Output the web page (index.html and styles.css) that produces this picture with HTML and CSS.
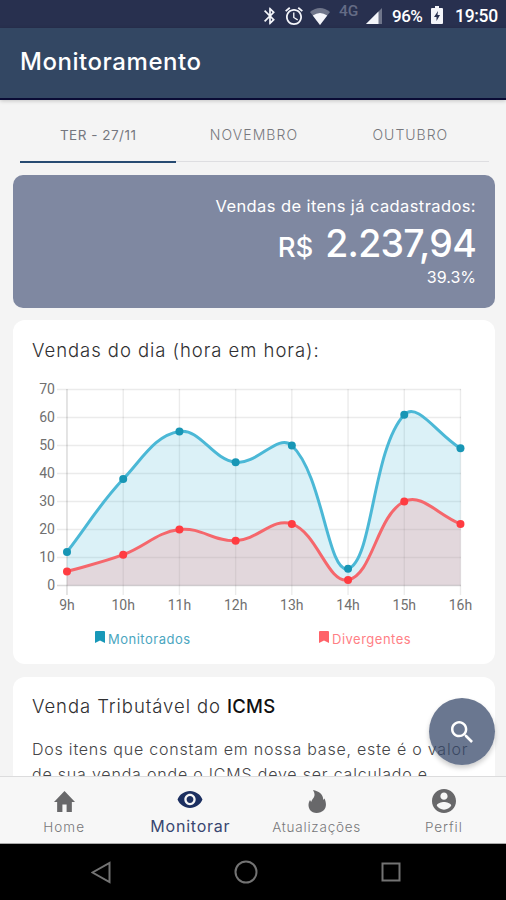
FILE: index.html
```html
<!DOCTYPE html>
<html lang="pt-BR">
<head>
<meta charset="utf-8">
<title>Monitoramento</title>
<link rel="stylesheet" href="styles.css">
</head>
<body>
<div class="phone">
  <div class="status">
    <svg class="s-bt" viewBox="5 2 14 20"><path d="M17.71 7.71L12 2h-1v7.59L6.41 5 5 6.41 10.59 12 5 17.59 6.41 19 11 14.41V22h1l5.71-5.71-4.3-4.29 4.3-4.29zM13 5.83l1.88 1.88L13 9.59V5.83zm1.88 10.46L13 18.17v-3.76l1.88 1.88z"/></svg>
    <svg class="s-alarm" viewBox="2 1.8 20 20.2"><path d="M22 5.72l-4.6-3.86-1.29 1.53 4.6 3.86L22 5.72zM7.88 3.39L6.6 1.86 2 5.71l1.29 1.53 4.59-3.85zM12.5 8H11v6l4.75 2.85.75-1.23-4-2.37V8zM12 4c-4.97 0-9 4.03-9 9s4.02 9 9 9c4.97 0 9-4.03 9-9s-4.03-9-9-9zm0 16c-3.87 0-7-3.13-7-7s3.13-7 7-7 7 3.13 7 7-3.13 7-7 7z"/></svg>
    <svg class="s-wifi" viewBox="0 0 20 17"><path opacity=".35" d="M10 17L0 4Q10-4 20 4Z"/><path d="M10 17L2.8 7.6Q10 2.5 17.2 7.6Z"/></svg>
    <span class="net">4G</span>
    <svg class="s-cell" viewBox="0 0 16 16"><path opacity=".35" d="M16 0v16H0Z"/><path d="M12.500 3.500V16H0Z"/></svg>
    <span class="pct">96%</span>
    <svg class="s-bat" viewBox="0 0 12 18"><path fill-rule="evenodd" d="M4 0h4v2h3q1 0 1 1v14q0 1-1 1H1q-1 0-1-1V3q0-1 1-1h3ZM7 5L3 11h2.500v4L9 9H6.500Z"/></svg>
    <span class="clock">19:50</span>
  </div>
  <header class="appbar"><h1>Monitoramento</h1></header>
  <main class="content">
    <nav class="tabs">
      <span class="tab tab-on"><b class="t1">TER - 27/11</b></span>
      <span class="tab"><b class="t2">NOVEMBRO</b></span>
      <span class="tab"><b class="t3">OUTUBRO</b></span>
    </nav>
    <section class="summary">
      <p class="sum-label">Vendas de itens já cadastrados:</p>
      <p class="sum-value"><span class="cur">R$</span><span class="amount">2.237,94</span></p>
      <p class="sum-pct">39.3%</p>
    </section>
    <section class="card chart-card">
      <h2 class="h-chart">Vendas do dia (hora em hora):</h2>
      <svg class="chart" id="chart" viewBox="13 380 482 235"></svg>
      <div class="legend">
        <span class="leg blue"><svg viewBox="0 0 10 12"><path d="M1 0h8q1 0 1 1v11L5 9.500 0 12V1Q0 0 1 0Z"/></svg><span class="lb">Monitorados</span></span>
        <span class="leg red"><svg viewBox="0 0 10 12"><path d="M1 0h8q1 0 1 1v11L5 9.500 0 12V1Q0 0 1 0Z"/></svg><span class="lr">Divergentes</span></span>
      </div>
    </section>
    <section class="card icms">
      <h2 class="h-icms">Venda Tributável do <strong>ICMS</strong></h2>
      <p><span class="p1">Dos itens que constam em nossa base, este é o valor</span><br><span class="p2">de sua venda onde o ICMS deve ser calculado e</span></p>
    </section>
    <button class="fab" aria-label="Buscar"><svg viewBox="3 3 17.500 17.500"><path d="M15.500 14h-.79l-.28-.27C15.410 12.590 16 11.110 16 9.500 16 5.910 13.090 3 9.500 3S3 5.910 3 9.500 5.910 16 9.500 16c1.610 0 3.090-.59 4.230-1.570l.27.28v.79l5 4.990L20.490 19l-4.990-5zm-6 0C7.010 14 5 11.990 5 9.500S7.010 5 9.500 5 14 7.010 14 9.500 11.990 14 9.500 14z"/></svg></button>
  </main>
  <nav class="bottom">
    <div class="item"><svg class="i-home" viewBox="2 3 20 17" preserveAspectRatio="none"><path d="M10 20v-6h4v6h5v-8h3L12 3 2 12h3v8z"/></svg><span class="n1">Home</span></div>
    <div class="item on"><svg class="i-eye" viewBox="1 4.500 22 15"><path d="M12 4.500C7 4.500 2.730 7.610 1 12c1.730 4.390 6 7.500 11 7.500s9.270-3.110 11-7.500c-1.730-4.390-6-7.500-11-7.500zM12 17c-2.760 0-5-2.240-5-5s2.240-5 5-5 5 2.240 5 5-2.240 5-5 5zm0-8c-1.660 0-3 1.340-3 3s1.340 3 3 3 3-1.340 3-3-1.340-3-3-3z"/></svg><span class="n2">Monitorar</span></div>
    <div class="item"><svg class="i-fire" viewBox="0 0 18 23"><path d="M5 0C11 1 16 5 15 10L16.500 8.500C18.500 13 18.500 17 16 20C12 24 5 24 2 20C0 17 0 13 2 10L3.200 12C4 8 9 7 5 0Z"/></svg><span class="n3">Atualizações</span></div>
    <div class="item"><svg class="i-user" viewBox="2 2 20 20"><path d="M12 2C6.480 2 2 6.480 2 12s4.480 10 10 10 10-4.480 10-10S17.520 2 12 2zm0 3c1.660 0 3 1.340 3 3s-1.340 3-3 3-3-1.340-3-3 1.340-3 3-3zm0 14.200c-2.500 0-4.710-1.280-6-3.220.03-1.990 4-3.080 6-3.080 1.990 0 5.970 1.090 6 3.080-1.290 1.940-3.500 3.220-6 3.220z"/></svg><span class="n4">Perfil</span></div>
  </nav>
  <div class="sys">
    <svg class="k-back" viewBox="0 0 20 23"><path d="M18.500 2v19L1.500 11.500Z"/></svg>
    <svg class="k-home" viewBox="0 0 24 24"><circle cx="12" cy="12" r="10.500"/></svg>
    <svg class="k-apps" viewBox="0 0 20 20"><rect x="1.500" y="1.500" width="17" height="17"/></svg>
  </div>
</div>
<script src="chart.js"></script>
</body>
</html>
```
FILE: styles.css
```css
* { box-sizing: border-box; margin: 0; padding: 0; }
body { width: 506px; height: 900px; overflow: hidden; font-family: Inter, "Liberation Sans", sans-serif; background: #f4f4f4; }
.phone { height: 900px; display: flex; flex-direction: column; }
span, b { white-space: nowrap; }
.status { flex: none; height: 28px; background: #28304f; display: flex; align-items: center; padding: 4px 0 0 264px; color: #fff; font-family: Roboto, sans-serif; font-weight: 500; }
.status svg { fill: #f4f5fa; flex: none; }
.s-bt { width: 12px; height: 18px; margin-top: -1px; }
.s-alarm { width: 18px; height: 18px; margin: -1px 0 0 9px; }
.s-wifi { width: 20px; height: 17px; margin-left: 7px; }
.net { font-size: 15.5px; color: #646b85; margin: -11px 0 0 9px; width: 20px; }
.s-cell { width: 16px; height: 16px; margin-left: 7px; }
.pct { font-size: 17px; margin-left: 10px; width: 31px; letter-spacing: -.5px; }
.s-bat { width: 12px; height: 18px; margin: -2px 0 0 8px; }
.clock { font-size: 17.5px; margin-left: 12px; letter-spacing: -.3px; }
.appbar { flex: none; height: 72px; background: #334763; border-bottom: 2px solid #0a0b35; padding: 19px 0 0 20px; box-shadow: 0 1px 4px #0003; }
.appbar h1 { color: #fff; font-size: 24px; line-height: 30px; font-weight: 500; letter-spacing: .55px; }
.content { flex: none; height: 676px; padding: 12px 11px 0 13px; position: relative; overflow: hidden; }
.tabs { height: 50px; margin: 0 6px 0 7px; display: grid; grid-template-columns: repeat(3, 1fr); border-bottom: 1px solid #dedee1; }
.tab { display: flex; justify-content: center; padding-top: 14px; height: 51px; color: #77787d; }
.tab b { font-weight: 300; font-size: 14px; line-height: 18px; letter-spacing: .5px; }
.tab .t2 { letter-spacing: 1.1px; margin-left: -1px; }
.tab .t3 { letter-spacing: 1px; margin-left: -1px; }
.tab-on { border-bottom: 2px solid #274b72; color: #75777f; }
.tab .t1 { font-weight: 400; font-size: 13.5px; }
.summary { height: 133px; margin-top: 13px; background: #7f88a1; border-radius: 10px; color: #fff; text-align: right; padding: 20px 19px 0 0; }
.sum-label { font-size: 16.5px; line-height: 22px; letter-spacing: .4px; }
.sum-value { display: flex; justify-content: flex-end; align-items: baseline; gap: 12px; line-height: 46px; height: 46px; margin-top: 4px; font-weight: 500; }
.cur { font-size: 27.5px; }
.amount { font-size: 37.5px; letter-spacing: -.8px; }
.sum-pct { font-size: 16px; line-height: 20px; }
.card { background: #fff; border-radius: 12px; margin-top: 12px; }
.card h2 { font-weight: 300; font-size: 18.5px; line-height: 24px; color: #303032; padding-left: 19px; }
.card .h-chart { letter-spacing: .95px; }
.card .h-icms { letter-spacing: .93px; }
.chart-card { height: 344px; padding-top: 18px; }
.chart { display: block; width: 482px; height: 235px; margin-top: 18px; }
.chart text { font: 14px Roboto, sans-serif; fill: #707070; }
.grid line { stroke: #00000014; stroke-width: 1.4; }
.legend { display: grid; grid-template-columns: 82px 224px 1fr; font-size: 13px; line-height: 18px; margin-top: 15px; letter-spacing: .5px; }
.leg { display: flex; align-items: center; gap: 3px; }
.blue { grid-column: 2; color: #4ba6bf; }
.red { color: #ff8085; }
.leg svg { width: 10px; height: 12px; margin-top: -4px; fill: #1898b8; }
.red svg { fill: #ff6268; }
.icms { height: 140px; padding-top: 17px; margin-top: 13px; }
.icms strong { font-weight: 500; color: #111; letter-spacing: .2px; }
.icms p { margin: 19px 0 0 19px; color: #464648; font-size: 16px; line-height: 25px; font-weight: 300; }
.p1 { letter-spacing: .78px; }
.p2 { letter-spacing: .8px; }
.fab { position: absolute; left: 429px; top: 598px; width: 66px; height: 67px; border: 0; border-radius: 50%; background: rgba(56,73,107,.75); box-shadow: 0 3px 5px #0003; display: flex; align-items: center; justify-content: center; }
.fab svg { width: 22px; height: 22px; fill: #fff; }
.bottom { flex: none; height: 68px; background: #f7f7f7; border-top: 1px solid #dcdcdd; border-bottom: 1px solid #aaa; display: grid; grid-template-columns: repeat(4, 1fr); padding-left: 1px; }
.item { display: flex; flex-direction: column; align-items: center; color: #77777a; font-size: 13.5px; font-weight: 300; height: 66px; justify-content: space-between; padding: 12px 0 7px; letter-spacing: .77px; }
.item svg { fill: #68686a; }
.item span { line-height: 18px; }
.item.on { color: #384670; font-size: 16px; font-weight: 400; padding-bottom: 8px; }
.item.on svg { fill: #1c2f60; }
.item .n1 { letter-spacing: 1.1px; }
.item .n4 { letter-spacing: .9px; margin-left: 2px; }
.i-home { width: 21px; height: 21px; margin-top: 2px; }
.i-eye { width: 26px; height: 17px; margin-top: 2px; }
.i-fire { width: 18px; height: 23px; margin-top: 1px; }
.i-user { width: 24px; height: 24px; margin-left: 2px; }
.sys { flex: 1; background: #000; display: flex; align-items: center; padding-left: 91px; }
.sys svg { fill: none; stroke: #737373; stroke-width: 2; }
.k-back { width: 20px; height: 23px; }
.k-home { width: 24px; height: 24px; margin-left: 123px; }
.k-apps { width: 20px; height: 20px; margin-left: 123px; }
```
FILE: chart.js
```js
const X0 = 67, STEP = 56.21, Y0 = 585.5, UNIT = 2.8, TENSION = 0.4;
const monitored = [12, 38, 55, 44, 50, 6, 61, 49];
const divergent = [5, 11, 20, 16, 22, 2, 30, 22];
const px = i => X0 + i * STEP;
const py = v => Y0 - v * UNIT;

function curve(values) {
  const pts = values.map((v, i) => [px(i), py(v)]);
  const cps = pts.map((p, i) => {
    const a = pts[i - 1] || p, b = pts[i + 1] || p;
    const d1 = Math.hypot(p[0] - a[0], p[1] - a[1]);
    const d2 = Math.hypot(b[0] - p[0], b[1] - p[1]);
    const f1 = TENSION * d1 / (d1 + d2), f2 = TENSION * d2 / (d1 + d2);
    const dx = b[0] - a[0], dy = b[1] - a[1];
    return { prev: [p[0] - f1 * dx, p[1] - f1 * dy], next: [p[0] + f2 * dx, p[1] + f2 * dy] };
  });
  let d = `M${pts[0]}`;
  for (let i = 1; i < pts.length; i++) d += `C${cps[i - 1].next} ${cps[i].prev} ${pts[i]}`;
  return d;
}

function series(values, line, fill, dot) {
  const d = curve(values);
  return `<path d="${d}L${px(7)} ${Y0}L${X0} ${Y0}Z" fill="${fill}"/>` +
    `<path d="${d}" fill="none" stroke="${line}" stroke-width="3"/>` +
    values.map((v, i) => `<circle cx="${px(i)}" cy="${py(v)}" r="4" fill="${dot}"/>`).join('');
}

let grid = '', labels = '';
for (let v = 0; v <= 70; v += 10) {
  grid += `<line x1="57" x2="461" y1="${py(v)}" y2="${py(v)}"/>`;
  labels += `<text x="55" y="${py(v) + 4.5}" text-anchor="end">${v}</text>`;
}
for (let i = 0; i < 8; i++) {
  grid += `<line x1="${px(i)}" x2="${px(i)}" y1="389" y2="595"/>`;
  labels += `<text x="${px(i)}" y="610" text-anchor="middle">${9 + i}h</text>`;
}
grid += `<line x1="57" x2="461" y1="${Y0}" y2="${Y0}"/><line x1="${X0}" x2="${X0}" y1="389" y2="595"/>`;
document.getElementById('chart').innerHTML = `<g class="grid">${grid}</g>${labels}` +
  series(monitored, '#4bb8d6', 'rgba(75,185,215,.2)', '#1896b5') +
  series(divergent, '#f5676c', 'rgba(255,116,117,.2)', '#ff3c41');
```
